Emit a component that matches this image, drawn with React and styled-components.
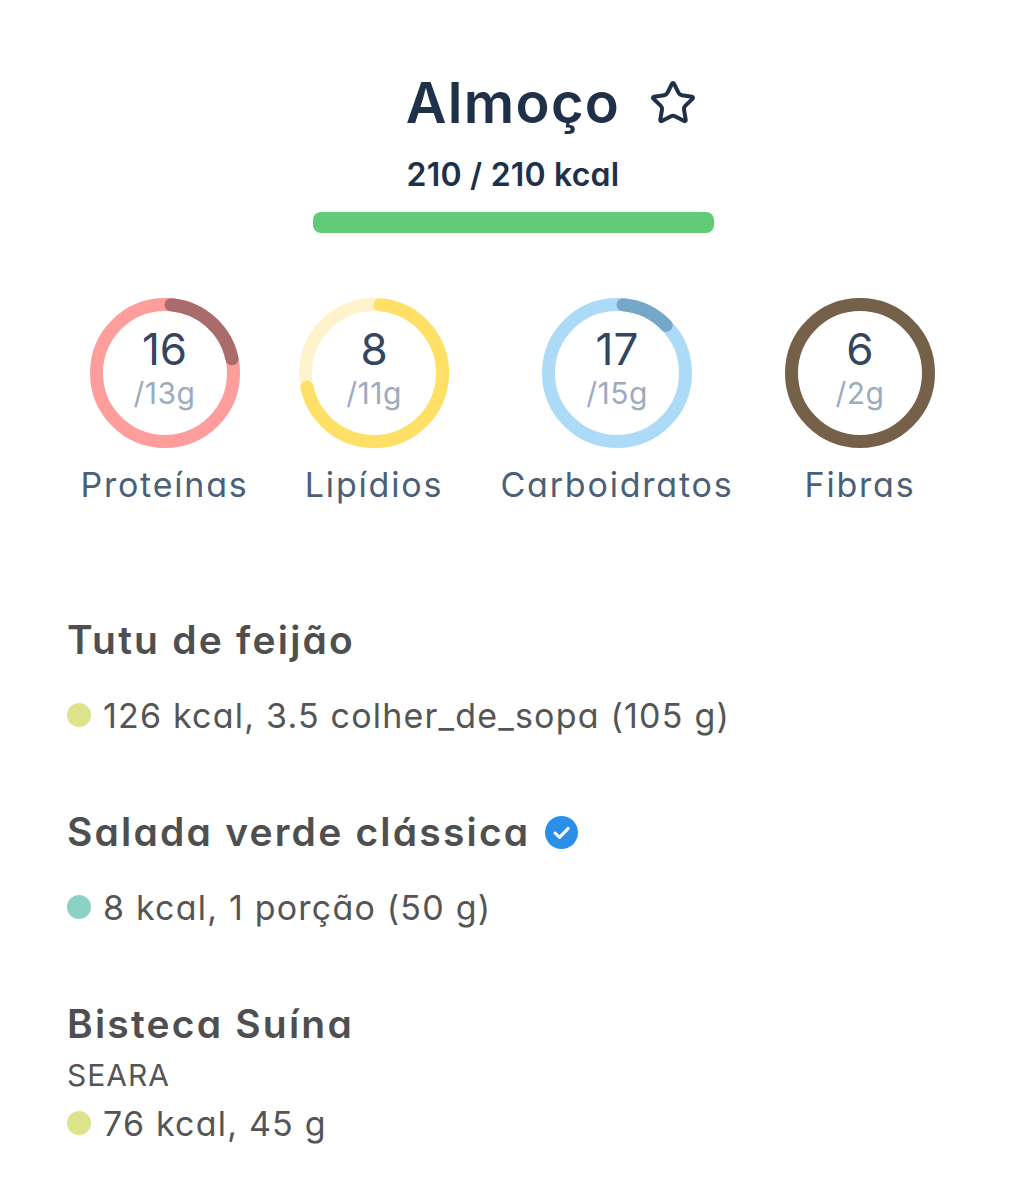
import React from 'react';
import styled, { createGlobalStyle } from 'styled-components';
import { Star } from 'lucide-react';

const GlobalStyles = createGlobalStyle`
  * {
    box-sizing: border-box;
    margin: 0;
    padding: 0;
  }
  html, body {
    background-color: #fff;
    height: 1200px;
    overflow: hidden;
  }
  body {
    font-family: Inter, "Noto Sans", sans-serif;
    font-feature-settings: 'cv11' 1;
  }
`;

const Page = styled.main`
  display: flex;
  flex-direction: column;
  padding-top: 68px;
`;

const TitleRow = styled.header`
  display: grid;
  grid-template-columns: 1fr auto 1fr;
  align-items: center;
  column-gap: 29px;
  height: 70px;
`;

const Title = styled.h1`
  grid-column: 2;
  color: #1f3049;
  font-size: 56px;
  font-weight: 600;
  line-height: 70px;
  letter-spacing: 1.3px;
`;

const StarIcon = styled(Star)`
  grid-column: 3;
  color: #1f3049;
`;

const Total = styled.p`
  color: #1f3049;
  font-size: 32px;
  font-weight: 600;
  line-height: 40px;
  letter-spacing: 0.2px;
  margin-top: 17px;
  text-align: center;
`;

const Bar = styled.div`
  align-self: center;
  background-color: #62cb78;
  border-radius: 8px;
  flex: none;
  height: 21px;
  margin-top: 17px;
  width: 401px;
`;

const Macros = styled.section`
  display: grid;
  grid-template-columns: 169px 150px 236px 150px;
  column-gap: 50px;
  margin-top: 65px;
  padding-left: 80px;
`;

const Macro = styled.div`
  align-items: center;
  display: flex;
  flex-direction: column;
`;

const RingBox = styled.div`
  height: 150px;
  position: relative;
  width: 150px;
`;

const RingText = styled.div`
  align-items: center;
  display: flex;
  flex-direction: column;
  gap: 4px;
  inset: 0;
  justify-content: center;
  padding-bottom: 8px;
  position: absolute;
`;

const Amount = styled.span`
  color: #32465f;
  font-size: 44px;
  line-height: 44px;
`;

const Goal = styled.span`
  color: #9babc0;
  font-size: 30px;
  letter-spacing: 0.5px;
  line-height: 36px;
`;

const MacroName = styled.span`
  color: #4a5f78;
  font-size: 34px;
  letter-spacing: 1.8px;
  line-height: 44px;
  margin-top: 15px;
  white-space: nowrap;
`;

const Foods = styled.section`
  display: flex;
  flex-direction: column;
  margin-top: 108px;
  padding-left: 67px;
`;

const Food = styled.article`
  display: flex;
  flex-direction: column;
  margin-bottom: 69px;
`;

const FoodName = styled.h2`
  align-items: center;
  color: #4f4f4f;
  display: flex;
  font-size: 39px;
  font-weight: 600;
  gap: 15px;
  letter-spacing: 2.2px;
  line-height: 50px;
`;

const Brand = styled.p`
  color: #555;
  font-size: 30px;
  letter-spacing: 1px;
  line-height: 36px;
  margin-top: 8px;
`;

const Detail = styled.p`
  align-items: center;
  color: #555;
  display: flex;
  font-size: 34px;
  gap: 12px;
  letter-spacing: 1.2px;
  line-height: 44px;
  margin-top: ${(p) => (p.$tight ? '9px' : '29px')};
`;

const Dot = styled.span`
  background-color: ${(p) => p.$color};
  border-radius: 50%;
  flex: none;
  height: 24px;
  margin-top: -2px;
  width: 24px;
`;

const macros = [
  { name: 'Proteínas', amount: 16, goal: '/13g', track: '#ff9c9c', arc: '#a96b6b', from: 5, to: 78 },
  { name: 'Lipídios', amount: 8, goal: '/11g', track: '#fff3cd', arc: '#ffe066', from: 5, to: 258 },
  { name: 'Carboidratos', amount: 17, goal: '/15g', track: '#addbf7', arc: '#75a8c8', from: 5, to: 46 },
  { name: 'Fibras', amount: 6, goal: '/2g', track: '#75604a' },
];

const Ring = ({ track, arc, from, to }) => (
  <svg width="150" height="150" viewBox="0 0 150 150">
    <circle cx="75" cy="75" r="68.5" fill="none" stroke={track} strokeWidth="13" />
    {arc && (
      <circle
        cx="75"
        cy="75"
        r="68.5"
        fill="none"
        stroke={arc}
        strokeWidth="13"
        strokeLinecap="round"
        pathLength="360"
        strokeDasharray={`${to - from} 360`}
        transform={`rotate(${from - 90} 75 75)`}
      />
    )}
  </svg>
);

const Verified = () => (
  <svg width="33" height="33" viewBox="0 0 33 33">
    <circle cx="16.5" cy="16.5" r="16.5" fill="#2a8fe8" />
    <path d="M10 17l4.6 4.4 8.6-9" fill="none" stroke="#fff" strokeWidth="3" strokeLinecap="round" strokeLinejoin="round" />
  </svg>
);

export default function App() {
  return (
    <>
      <GlobalStyles />
      <Page>
        <TitleRow>
          <Title>Almoço</Title>
          <StarIcon size={48} strokeWidth={2} />
        </TitleRow>
        <Total>210 / 210 kcal</Total>
        <Bar />
        <Macros>
          {macros.map((m) => (
            <Macro key={m.name}>
              <RingBox>
                <Ring {...m} />
                <RingText>
                  <Amount>{m.amount}</Amount>
                  <Goal>{m.goal}</Goal>
                </RingText>
              </RingBox>
              <MacroName>{m.name}</MacroName>
            </Macro>
          ))}
        </Macros>
        <Foods>
          <Food>
            <FoodName>Tutu de feijão</FoodName>
            <Detail>
              <Dot $color="#dde38a" />
              126 kcal, 3.5 colher_de_sopa (105 g)
            </Detail>
          </Food>
          <Food>
            <FoodName>
              Salada verde clássica
              <Verified />
            </FoodName>
            <Detail>
              <Dot $color="#8ad2c4" />
              8 kcal, 1 porção (50 g)
            </Detail>
          </Food>
          <Food>
            <FoodName>Bisteca Suína</FoodName>
            <Brand>SEARA</Brand>
            <Detail $tight>
              <Dot $color="#dde38a" />
              76 kcal, 45 g
            </Detail>
          </Food>
        </Foods>
      </Page>
    </>
  );
}
